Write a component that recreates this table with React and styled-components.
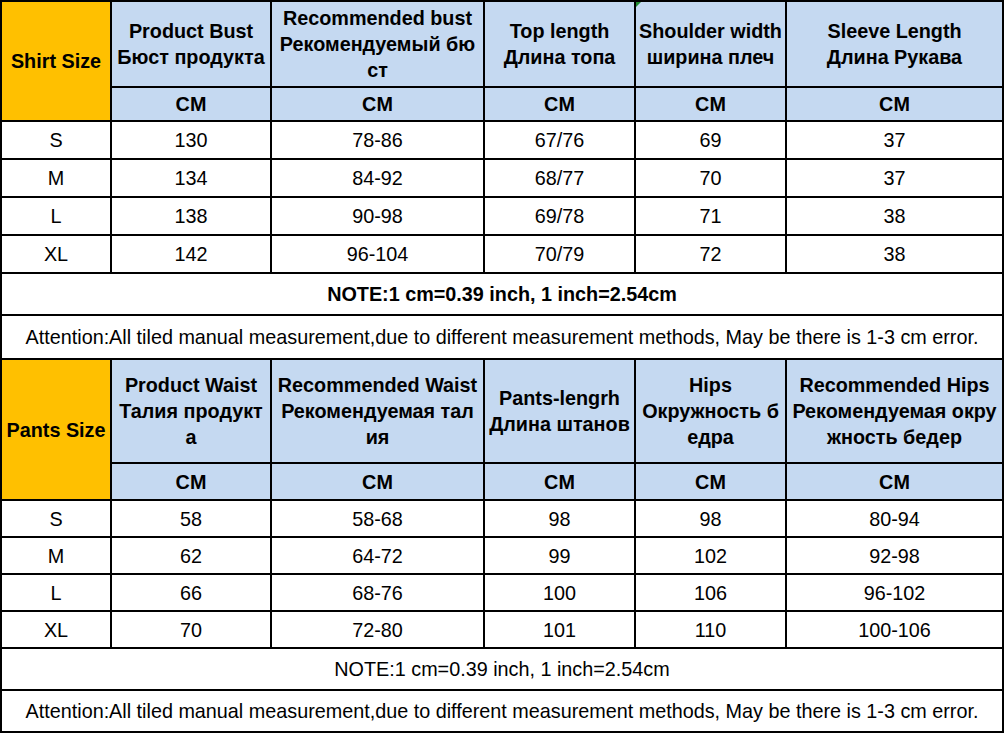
import styled, { createGlobalStyle } from 'styled-components';

const GlobalStyle = createGlobalStyle`
  html, body {
    margin: 0;
    padding: 0;
    background: #ffffff;
  }
  body {
    font-family: "Liberation Sans", Arial, "Noto Sans", sans-serif;
    color: #000000;
  }
`;

const colors = {
  blue: '#c5d9f1',
  yellow: '#ffc000',
  line: '#000000',
};

const Sheet = styled.table`
  border-collapse: collapse;
  table-layout: fixed;
  width: 1002px;
  font-size: 19.8px;
`;

const Row = styled.tr`
  height: ${(p) => p.$h}px;
`;

const Cell = styled.td`
  position: relative;
  border: 2px solid ${colors.line};
  padding: 0;
  text-align: center;
  vertical-align: middle;
  white-space: nowrap;
  overflow: hidden;
  line-height: ${(p) => (p.$head ? '26px' : '22px')};
  font-weight: ${(p) => (p.$bold ? 700 : 400)};
  background: ${(p) => (p.$bg ? colors[p.$bg] : '#ffffff')};

  ${(p) =>
    p.$marker &&
    `
    &::before {
      content: '';
      position: absolute;
      top: 0;
      left: 0;
      border-top: 5px solid #1f8a2e;
      border-right: 5px solid transparent;
    }
  `}
`;

const widths = [110, 160, 213, 151, 151, 217];

const shirtHeads = [
  ['Product Bust', 'Бюст продукта'],
  ['Recommended bust', 'Рекомендуемый бю', 'ст'],
  ['Top length', 'Длина топа'],
  ['Shoulder width', 'ширина плеч'],
  ['Sleeve Length', 'Длина Рукава'],
];

const shirtRows = [
  ['S', '130', '78-86', '67/76', '69', '37'],
  ['M', '134', '84-92', '68/77', '70', '37'],
  ['L', '138', '90-98', '69/78', '71', '38'],
  ['XL', '142', '96-104', '70/79', '72', '38'],
];

const pantsHeads = [
  ['Product Waist', 'Талия продукт', 'а'],
  ['Recommended Waist', 'Рекомендуемая тал', 'ия'],
  ['Pants-lengrh', 'Длина штанов'],
  ['Hips', 'Окружность б', 'едра'],
  ['Recommended Hips', 'Рекомендуемая окру', 'жность бедер'],
];

const pantsRows = [
  ['S', '58', '58-68', '98', '98', '80-94'],
  ['M', '62', '64-72', '99', '102', '92-98'],
  ['L', '66', '68-76', '100', '106', '96-102'],
  ['XL', '70', '72-80', '101', '110', '100-106'],
];

const ATTENTION =
  'Attention:All tiled manual measurement,due to different measurement methods, May be there is 1-3 cm error.';
const NOTE = 'NOTE:1 cm=0.39 inch, 1 inch=2.54cm';

const Lines = ({ lines }) =>
  lines.map((l, i) => (
    <span key={i}>
      {i > 0 && <br />}
      {l}
    </span>
  ));

const Section = ({ title, heads, rows, headH, unitH, rowH, boldNote, noteH, attentionH, markerCol }) => (
  <>
    <Row $h={headH}>
      <Cell rowSpan={2} $bg="yellow" $bold>
        {title}
      </Cell>
      {heads.map((h, i) => (
        <Cell key={i} $bg="blue" $bold $head $marker={markerCol === i}>
          <Lines lines={h} />
        </Cell>
      ))}
    </Row>
    <Row $h={unitH}>
      {heads.map((_, i) => (
        <Cell key={i} $bg="blue" $bold>
          CM
        </Cell>
      ))}
    </Row>
    {rows.map((r) => (
      <Row key={r[0]} $h={rowH}>
        {r.map((v, i) => (
          <Cell key={i}>{v}</Cell>
        ))}
      </Row>
    ))}
    <Row $h={noteH}>
      <Cell colSpan={6} $bold={boldNote}>
        {NOTE}
      </Cell>
    </Row>
    <Row $h={attentionH}>
      <Cell colSpan={6}>{ATTENTION}</Cell>
    </Row>
  </>
);

export default function App() {
  return (
    <>
      <GlobalStyle />
      <Sheet>
        <colgroup>
          {widths.map((w, i) => (
            <col key={i} style={{ width: w }} />
          ))}
        </colgroup>
        <tbody>
          <Section
            title="Shirt Size"
            heads={shirtHeads}
            rows={shirtRows}
            headH={86}
            unitH={34}
            rowH={38}
            boldNote
            noteH={42}
            attentionH={44}
            markerCol={3}
          />
          <Section
            title="Pants Size"
            heads={pantsHeads}
            rows={pantsRows}
            headH={104}
            unitH={37}
            rowH={37}
            noteH={42}
            attentionH={42}
          />
        </tbody>
      </Sheet>
    </>
  );
}
